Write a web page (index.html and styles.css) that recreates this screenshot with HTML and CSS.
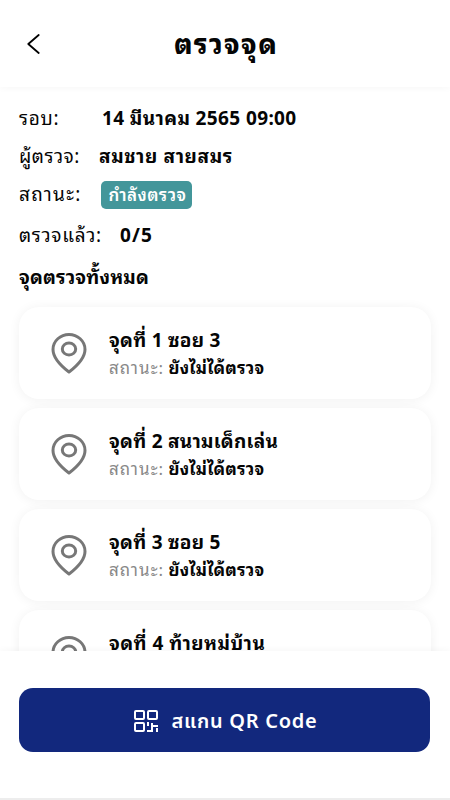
FILE: index.html
```html
<!DOCTYPE html>
<html lang="th">
<head>
<meta charset="utf-8">
<title>ตรวจจุด</title>
<link rel="stylesheet" href="styles.css">
</head>
<body>
<svg class="defs" width="0" height="0" aria-hidden="true">
  <symbol id="pin" viewBox="0 0 36 42"><path d="M18 2.400C9.500 2.400 2 9 2 17.400C2 26.300 10 33.800 18 40C26 33.800 34 26.300 34 17.400C34 9 26.500 2.400 18 2.400Z"/><ellipse cx="18" cy="17" rx="6.700" ry="6"/></symbol>
</svg>
<div class="screen">
  <header class="header">
    <svg class="back" viewBox="0 0 14 20"><path d="M12.700 1L2.300 10L12.700 19"/></svg>
    <h1 class="title"><span>ตรวจจุด</span></h1>
  </header>
  <main class="content">
    <div class="row"><span class="label round">รอบ:</span><b class="date">14 มีนาคม 2565 09:00</b></div>
    <div class="row"><span class="label person">ผู้ตรวจ:</span><b class="name">สมชาย สายสมร</b></div>
    <div class="row"><span class="label state">สถานะ:</span><span class="badge">กำลังตรวจ</span></div>
    <div class="row count-row"><span class="label checked">ตรวจแล้ว:</span><b class="count">0/5</b></div>
    <h2 class="heading">จุดตรวจทั้งหมด</h2>
    <div class="list">
      <article class="card"><svg class="pin"><use href="#pin"/></svg><div class="info"><h3>จุดที่ 1 ซอย 3</h3><p><span>สถานะ:</span> <b>ยังไม่ได้ตรวจ</b></p></div></article>
      <article class="card"><svg class="pin"><use href="#pin"/></svg><div class="info"><h3>จุดที่ 2 สนามเด็กเล่น</h3><p><span>สถานะ:</span> <b>ยังไม่ได้ตรวจ</b></p></div></article>
      <article class="card"><svg class="pin"><use href="#pin"/></svg><div class="info"><h3>จุดที่ 3 ซอย 5</h3><p><span>สถานะ:</span> <b>ยังไม่ได้ตรวจ</b></p></div></article>
      <article class="card"><svg class="pin"><use href="#pin"/></svg><div class="info"><h3 class="four">จุดที่ 4 ท้ายหมู่บ้าน</h3><p><span>สถานะ:</span> <b>ยังไม่ได้ตรวจ</b></p></div></article>
    </div>
  </main>
  <footer class="footer">
    <button class="scan">
      <svg class="qr" viewBox="0 0 24 22"><rect x="1" y="1" width="9" height="8" rx="1"/><rect x="14" y="1" width="9" height="8" rx="1"/><rect x="1" y="13" width="9" height="8" rx="1"/><path d="M14 12V16M13 21H18V15M18 13V16H24M23 18V22"/></svg>
      <span>สแกน QR Code</span>
    </button>
  </footer>
</div>
</body>
</html>
```
FILE: styles.css
```css
* { box-sizing: border-box; }
body { margin: 0; background: #fff; color: #050505; font-family: "Noto Sans", "Noto Sans Thai Looped", "Noto Looped Thai", "Sarabun", "Noto Sans Thai", sans-serif; }
h1, h2, h3, p { margin: 0; }
.defs { display: none; }
.screen { height: 800px; display: flex; flex-direction: column; overflow: hidden; border-bottom: 2px solid #ededed; }
.header { height: 87px; flex: none; display: grid; grid-template-columns: 40px 1fr 40px; align-items: center; padding: 0 26px; box-shadow: 0 1px 7px #00000009; }
.back { width: 14px; height: 20px; fill: none; stroke: #000; stroke-width: 1.8; stroke-linecap: round; stroke-linejoin: round; }
.title { padding-left: 2px; text-align: center; font-size: 27px; font-weight: 800; line-height: 40px; letter-spacing: 1.4px; }
.content { flex: 1; min-height: 0; overflow: hidden; padding: 12px 19px 0; }
.row { height: 38px; display: flex; align-items: center; font-size: 19px; line-height: 38px; white-space: nowrap; }
.label { width: 81px; flex: none; }
.round { width: 83px; letter-spacing: .7px; }
.person { width: 80px; letter-spacing: .5px; }
.state { width: 82px; letter-spacing: 1.3px; }
.count-row { height: 43px; }
.checked { width: 101px; letter-spacing: .7px; }
.date { letter-spacing: .38px; }
.name { letter-spacing: .6px; }
.count { letter-spacing: 1.1px; }
.badge { width: 91px; height: 28px; margin-top: 1px; border-radius: 5px; background: #43969a; color: #fff; font-size: 17px; font-weight: 600; line-height: 28px; letter-spacing: .45px; padding-left: 2px; text-align: center; }
.heading { height: 51px; font-size: 19px; line-height: 43px; letter-spacing: .15px; }
.list { display: flex; flex-direction: column; gap: 9px; }
.card { height: 92px; flex: none; display: flex; align-items: center; padding-left: 32px; border-radius: 20px; background: #fff; box-shadow: 0 1px 12px #0000000f; }
.pin { width: 36px; height: 42px; margin-right: 22px; fill: none; stroke: #777; stroke-width: 3; stroke-linejoin: round; }
.info { white-space: nowrap; padding-top: 2px; }
.info h3 { font-size: 19px; line-height: 27px; letter-spacing: .25px; }
.info .four { letter-spacing: .45px; }
.info p { font-size: 17px; line-height: 27px; }
.info p span { color: #888; letter-spacing: 1px; }
.info p b { letter-spacing: .2px; }
.footer { height: 147px; flex: none; position: relative; background: #fff; padding: 37px 20px 0 19px; box-shadow: 0 -1px 7px #00000009; }
.scan { width: 100%; height: 64px; display: flex; align-items: center; justify-content: center; gap: 14px; border: 0; border-radius: 14px; background: #12287d; color: #fff; font: 600 20px/30px "Noto Sans", "Noto Sans Thai", sans-serif; letter-spacing: .7px; padding: 1px 4px 0 6px; }
.qr { width: 24px; height: 22px; fill: none; stroke: #fff; stroke-width: 2; }
```
